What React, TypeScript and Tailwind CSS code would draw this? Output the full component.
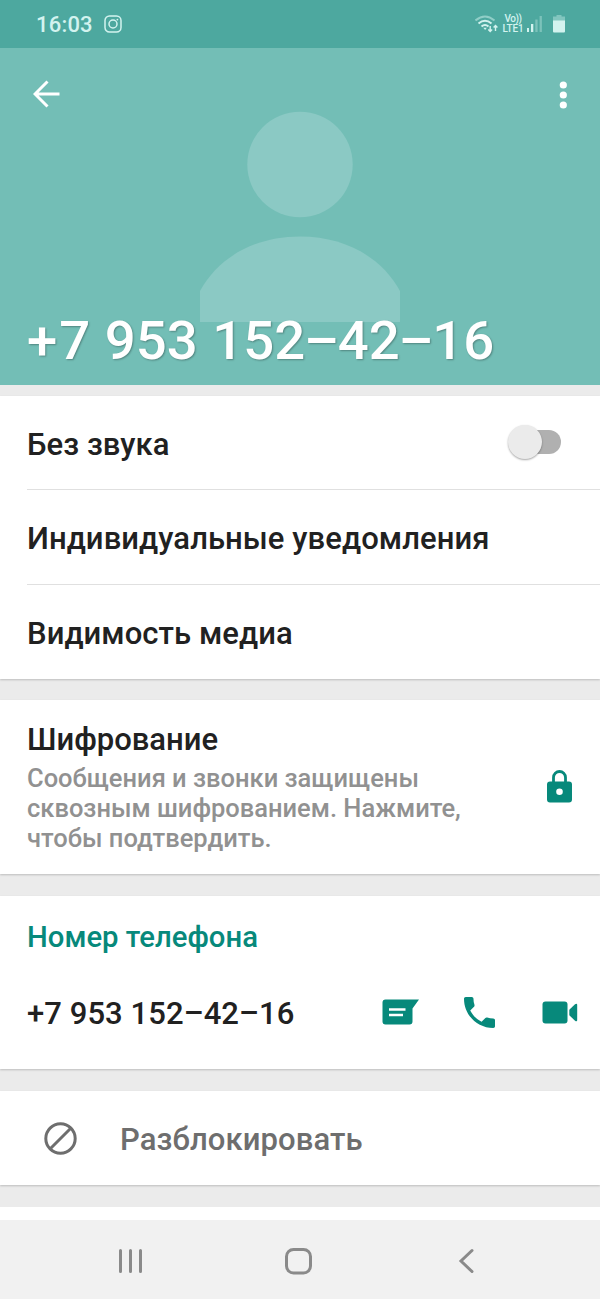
import React from 'react';

const settings = ['Без звука', 'Индивидуальные уведомления', 'Видимость медиа'];
const phone = '+7 953 152–42–16';

const StatusBar = () => (
    <div className="flex h-12 items-center bg-[#4da89f] pl-[36px] pr-[34px] text-[#d3f3ef]">
        <span className="w-[68px] pt-0.5 text-[22px] font-medium leading-6 tracking-[0.2px]">16:03</span>
        <svg width="18" height="18" viewBox="0 0 18 18" fill="none" stroke="currentColor" strokeWidth="1.5">
            <rect x="1" y="1" width="16" height="16" rx="4.5" />
            <circle cx="9" cy="9" r="4" />
            <circle cx="13.4" cy="4.6" r="0.9" fill="currentColor" stroke="none" />
        </svg>
        <div className="ml-auto flex items-center">
            <svg width="24" height="20" viewBox="0 0 24 20" fill="none" stroke="currentColor" strokeWidth="2">
                <path d="M.5 6.5Q10 -1.5 19.5 6.5" opacity="0.5" />
                <path d="M3.5 9.5Q10 4 16.5 9.5" />
                <path d="M6.5 12.5Q10 9.5 13.5 12.5" />
                <path d="M8.3 13.8h3.5l-1.7 2.2z" fill="currentColor" stroke="none" />
                <path d="M15.2 12v5.5M13.3 15.5l1.9 2 1.9-2M20.5 17v-5.5M18.6 13.5l1.9-2 1.9 2" strokeWidth="1.4" />
            </svg>
            <div className="ml-[3px] flex w-[22px] flex-col gap-px whitespace-nowrap text-center text-[10px] font-medium leading-[9px]">
                <div className="h-[9px] tracking-[-0.5px]">Vo))</div>
                <div className="h-[9px] tracking-[-0.1px]">LTE1</div>
            </div>
            <svg className="ml-[3px]" width="17" height="18" viewBox="0 0 17 18" fill="currentColor">
                <rect x="0" y="13" width="2" height="4" />
                <rect x="4" y="9" width="2.3" height="8" />
                <rect x="8.3" y="4.5" width="2.3" height="12.5" opacity="0.35" />
                <rect x="12.6" y="1" width="2.3" height="16" opacity="0.35" />
            </svg>
            <svg className="ml-[9px] mr-px" width="12" height="18" viewBox="0 0 12 18" fill="currentColor">
                <path d="M3.5 0h5v1.5H12V6H0V1.5h3.5z" opacity="0.4" />
                <path d="M0 5.5h12v11a1 1 0 0 1-1 1H1a1 1 0 0 1-1-1z" />
            </svg>
        </div>
    </div>
);

const Header = () => (
    <div className="relative h-[337px] bg-[#73beb6] text-white">
        <div className="flex h-[94px] items-center justify-between px-[33px]">
            <svg className="-mt-px" width="28" height="28" viewBox="0 0 28 28" fill="none" stroke="currentColor" strokeWidth="3">
                <path d="M26.5 14H2.5M14.5 1.5L2 14l12.5 12.5" />
            </svg>
            <svg width="8" height="28" viewBox="0 0 8 28" fill="currentColor">
                <circle cx="4.3" cy="4" r="3.6" />
                <circle cx="4.3" cy="14" r="3.6" />
                <circle cx="4.3" cy="24" r="3.6" />
            </svg>
        </div>
        <svg className="absolute left-[200px] top-[63px]" width="200" height="211" viewBox="0 0 200 211" fill="#8bc9c4">
            <circle cx="100" cy="53.5" r="52.7" />
            <path d="M0 211V180C18 147 54 125.5 100 125.5S182 147 200 180V211z" />
        </svg>
        <h1 className="absolute left-[27px] top-[262px] whitespace-nowrap text-[54.5px] font-medium leading-[60px] [word-spacing:1px] [text-shadow:1px_1px_2px_rgba(0,0,0,0.3)]">
            <span className="tracking-[2px]">+</span>7 953 15<span className="tracking-[-1.2px]">2–</span>4<span className="tracking-[-1.2px]">2–</span>16
        </h1>
    </div>
);

const App = () => {
    return (
        <div className="flex h-[1299px] w-[600px] flex-col overflow-hidden bg-[#ebebeb] font-['Roboto',sans-serif] text-[#212121]">
            <StatusBar />
            <Header />

            {/* Chat settings */}
            <div className="mt-[11px] bg-white pl-[27px] shadow-[0_1px_2px_rgba(0,0,0,0.2)]">
                {settings.map((item, index) => (
                    <div
                        key={item}
                        className="flex h-[94.5px] items-center justify-between border-b border-[#e0e0e0] pr-[39px] last:border-b-0"
                    >
                        <span className="pt-[5px] text-[31px] font-medium leading-9 tracking-[0.07px]">{item}</span>
                        {index === 0 && (
                            <div className="relative h-6 w-[48px] rounded-full bg-[#b0b0b0]">
                                <div className="absolute -left-[5px] -top-[5px] size-[34px] rounded-full bg-[#ebebeb] shadow-[0_1px_2px_rgba(0,0,0,0.35)]" />
                            </div>
                        )}
                    </div>
                ))}
            </div>

            {/* Encryption */}
            <div className="mt-[21px] flex h-[174px] items-center justify-between bg-white pl-[27px] pr-[28px] shadow-[0_1px_2px_rgba(0,0,0,0.2)]">
                <div className="w-[460px] pt-px">
                    <h2 className="text-[31px] font-medium leading-9">Шифрование</h2>
                    <p className="mt-[5px] whitespace-nowrap text-[25.5px] font-medium leading-[30px] text-[#919191]">
                        Сообщения и звонки защищены
                        <br />
                        сквозным шифрованием. Нажмите,
                        <br />
                        чтобы подтвердить.
                    </p>
                </div>
                <svg className="-mt-0.5" width="25" height="33" viewBox="0 0 25 33" fill="#07897b">
                    <path d="M6.5 12V7.5a6 6 0 0 1 12 0V12" fill="none" stroke="#07897b" strokeWidth="2.8" />
                    <path
                        fillRule="evenodd"
                        d="M3 11.5h19a3 3 0 0 1 3 3V29.5a3 3 0 0 1-3 3H3a3 3 0 0 1-3-3V14.5a3 3 0 0 1 3-3zM12.5 18.5a3.3 3.3 0 1 0 0 6.6a3.3 3.3 0 1 0 0-6.6z"
                    />
                </svg>
            </div>

            {/* Phone number */}
            <div className="mt-[22px] h-[173px] bg-white pl-[27px] pr-[22px] pt-[21px] text-[#07897b] shadow-[0_1px_2px_rgba(0,0,0,0.2)]">
                <h2 className="text-[29.3px] font-medium leading-10">Номер телефона</h2>
                <div className="mt-[31px] flex h-12 items-center">
                    <span className="mr-auto pt-1 text-[31px] font-medium tracking-[0.07px] text-[#212121]">{phone}</span>
                    <svg width="37" height="26" viewBox="0 0 37 26" fill="currentColor">
                        <path d="M3.5 .5H37L30.5 9.5V22.5a3 3 0 0 1-3 3H3.5a3 3 0 0 1-3-3V3.5a3 3 0 0 1 3-3z" />
                        <path d="M7 10.5H23.5M7 16H21" stroke="white" strokeWidth="2.5" />
                    </svg>
                    <svg className="ml-[45px]" width="31" height="31" viewBox="3 3 18 18" fill="currentColor">
                        <path d="M6.62 10.79c1.44 2.83 3.76 5.14 6.59 6.59l2.2-2.2c.27-.27.67-.36 1.02-.24 1.12.37 2.33.57 3.57.57.55 0 1 .45 1 1V20c0 .55-.45 1-1 1-9.39 0-17-7.61-17-17 0-.55.45-1 1-1h3.5c.55 0 1 .45 1 1 0 1.25.2 2.45.57 3.57.11.35.03.74-.25 1.02z" />
                    </svg>
                    <svg className="ml-[47px]" width="36" height="23" viewBox="0 0 36 23" fill="currentColor">
                        <rect width="25" height="22" x=".5" y=".5" rx="3" />
                        <path d="M27.3 8.8L33 3.3Q35.2 2 35.2 4V19Q35.2 21 33 19.7L27.3 14.2z" />
                    </svg>
                </div>
            </div>

            {/* Block / unblock */}
            <div className="mt-[22px] flex h-[94px] shrink-0 items-center bg-white pl-[43.5px] text-[#6e6e6e] shadow-[0_1px_2px_rgba(0,0,0,0.2)]">
                <svg width="33" height="33" viewBox="0 0 33 33" fill="none" stroke="currentColor" strokeWidth="3">
                    <circle cx="16.5" cy="16.5" r="14.7" />
                    <path d="M6 27L27 6" />
                </svg>
                <span className="ml-[43.5px] pt-1 text-[31px] font-medium tracking-[0.1px]">Разблокировать</span>
            </div>

            <div className="mt-[22px] h-[13px] shrink-0 bg-white" />

            {/* Navigation bar */}
            <div className="flex h-[79px] shrink-0 items-center bg-[#f1f1f1] pl-[118px] text-[#8a8a8a]">
                <svg className="mt-0.5" width="26" height="26" viewBox="0 0 26 26" stroke="currentColor" strokeWidth="3" strokeLinecap="round">
                    <path d="M2.5 2.5V23.5M12.5 2.5V23.5M22.5 2.5V23.5" />
                </svg>
                <svg className="ml-[140px] mt-0.5" width="28" height="28" viewBox="0 0 28 28" fill="none" stroke="currentColor" strokeWidth="3">
                    <rect x="2.5" y="2.5" width="24" height="23.5" rx="7" />
                </svg>
                <svg className="ml-[146px] mt-0.5" width="17" height="26" viewBox="0 0 17 26" fill="none" stroke="currentColor" strokeWidth="3" strokeLinecap="round">
                    <path d="M14 2.5L3 13l11 10.5" />
                </svg>
            </div>
        </div>
    );
};

export default App;
